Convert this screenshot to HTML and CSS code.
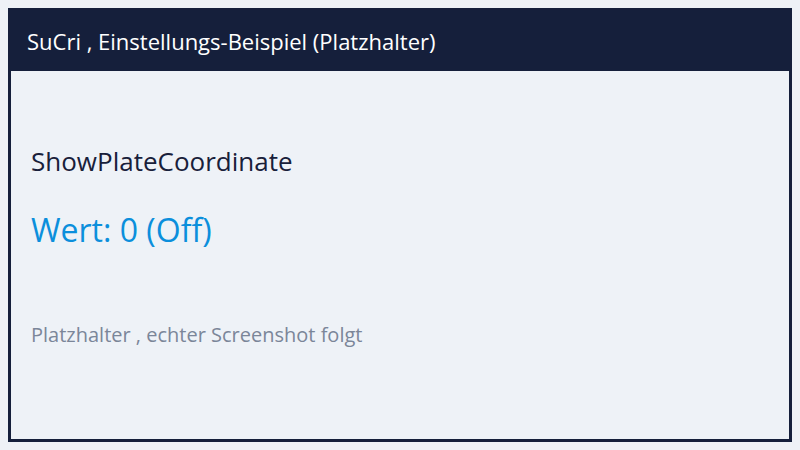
FILE: index.html
```html
<!DOCTYPE html>
<html lang="de">
<head>
<meta charset="utf-8">
<link rel="stylesheet" href="styles.css">
</head>
<body>
<div class="card">
  <header class="card-header">SuCri , Einstellungs-Beispiel (Platzhalter)</header>
  <main class="card-body">
    <div class="setting-name">ShowPlateCoordinate</div>
    <div class="setting-value">Wert: 0 (Off)</div>
    <div class="placeholder">Platzhalter , echter Screenshot folgt</div>
  </main>
</div>
</body>
</html>
```
FILE: styles.css
```css
html, body { margin: 0; padding: 0; }
body {
  background: #eef1f6;
  padding: 8px;
  font-family: "Open Sans", "Noto Sans", sans-serif;
}
.card {
  box-sizing: border-box;
  height: 434px;
  border: 3px solid #151f3b;
  background: #eef2f7;
  display: flex;
  flex-direction: column;
}
.card-header {
  height: 60px;
  background: #151f3b;
  color: #ffffff;
  display: flex;
  align-items: center;
  padding: 0 16px;
  font-size: 22px;
}
.card-body {
  padding: 0 20px;
  display: flex;
  flex-direction: column;
}
.setting-name {
  margin-top: 73px;
  font-size: 26px;
  line-height: 34px;
  color: #18203a;
}
.setting-value {
  margin-top: 32px;
  font-size: 32px;
  line-height: 40px;
  color: #0b8fdc;
}
.placeholder {
  margin-top: 72px;
  font-size: 20px;
  line-height: 26px;
  color: #7b8699;
}
```
